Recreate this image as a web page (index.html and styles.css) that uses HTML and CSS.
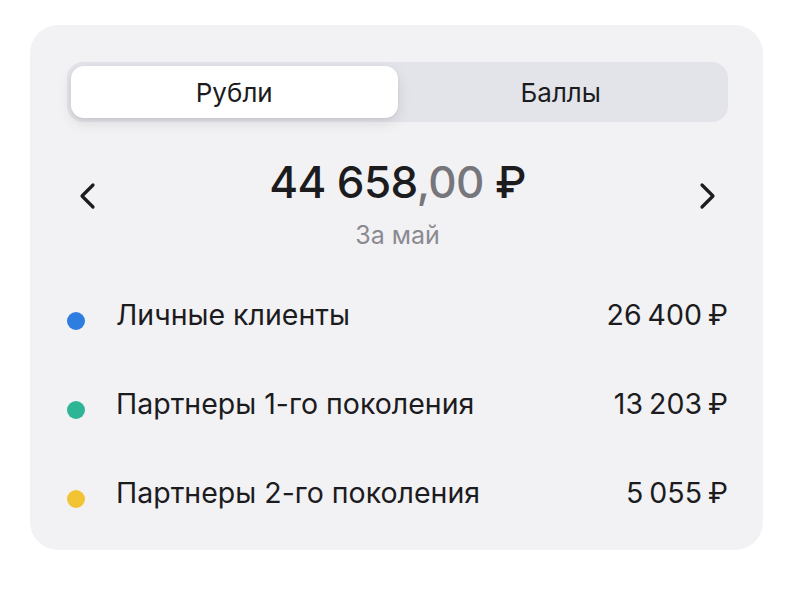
FILE: index.html
```html
<!DOCTYPE html>
<html lang="ru">
<head>
<meta charset="utf-8">
<link rel="stylesheet" href="styles.css">
</head>
<body>
<div class="card">
  <div class="seg">
    <div class="tab active">Рубли</div>
    <div class="tab">Баллы</div>
  </div>
  <div class="summary">
    <div class="chev">
      <svg width="18" height="28" viewBox="0 0 18 28"><path d="M14 3 L3 14 L14 25" fill="none" stroke="#1c1c1e" stroke-width="3.2" stroke-linecap="round" stroke-linejoin="round"/></svg>
    </div>
    <div class="total">
      <div class="amount">44 658<span class="cents">,00</span> ₽</div>
      <div class="period">За май</div>
    </div>
    <div class="chev">
      <svg width="18" height="28" viewBox="0 0 18 28"><path d="M4 3 L15 14 L4 25" fill="none" stroke="#1c1c1e" stroke-width="3.2" stroke-linecap="round" stroke-linejoin="round"/></svg>
    </div>
  </div>
  <div class="rows">
    <div class="row"><span class="dot blue"></span><span class="label">Личные клиенты</span><span class="value">26 400 ₽</span></div>
    <div class="row"><span class="dot green"></span><span class="label">Партнеры 1-го поколения</span><span class="value">13 203 ₽</span></div>
    <div class="row"><span class="dot yellow"></span><span class="label">Партнеры 2-го поколения</span><span class="value">5 055 ₽</span></div>
  </div>
</div>
</body>
</html>
```

FILE: styles.css
```css
* { box-sizing: border-box; }
html, body { margin: 0; padding: 0; background: #ffffff; }
body {
  font-family: Inter, "Noto Sans", "DejaVu Sans", sans-serif;
  color: #1c1c1e;
}
.card {
  margin: 25px 0 0 30px;
  width: 733px;
  height: 525px;
  background: #f2f2f5;
  border-radius: 28px;
  padding: 37px 35px 0 37px;
}
.seg {
  display: flex;
  height: 60px;
  background: #e3e4e9;
  border-radius: 16px;
  padding: 4px;
}
.tab {
  flex: 1;
  display: flex;
  align-items: center;
  justify-content: center;
  font-size: 26px;
  color: #1c1c1e;
  border-radius: 13px;
}
.tab.active {
  background: #ffffff;
  box-shadow: 0 5px 14px rgba(0, 0, 0, 0.10), 0 1px 3px rgba(0,0,0,0.06);
}
.summary {
  display: flex;
  align-items: flex-start;
  justify-content: space-between;
  margin-top: 32px;
  padding: 0 12px 0 12px;
}
.chev { padding-top: 28px; width: 18px; }
.chev svg { display: block; }
.total { text-align: center; }
.amount {
  font-size: 44px;
  line-height: 56px;
  font-weight: 500;
  letter-spacing: -0.6px;
}
.cents { color: #76767b; }
.period {
  margin-top: 11px;
  font-size: 25px;
  line-height: 28px;
  color: #8a8a8f;
}
.rows {
  margin-top: 49px;
  display: flex;
  flex-direction: column;
  gap: 56px;
}
.row {
  display: flex;
  align-items: center;
  height: 33px;
  font-size: 28.5px;
}
.dot {
  width: 18px;
  height: 18px;
  border-radius: 50%;
  margin-top: 12px;
  margin-right: 31px;
  flex: none;
}
.blue { background: #2d7ee0; }
.green { background: #2db596; }
.yellow { background: #f2c332; }
.label { flex: 1; }
.value { text-align: right; word-spacing: -2px; }
```
